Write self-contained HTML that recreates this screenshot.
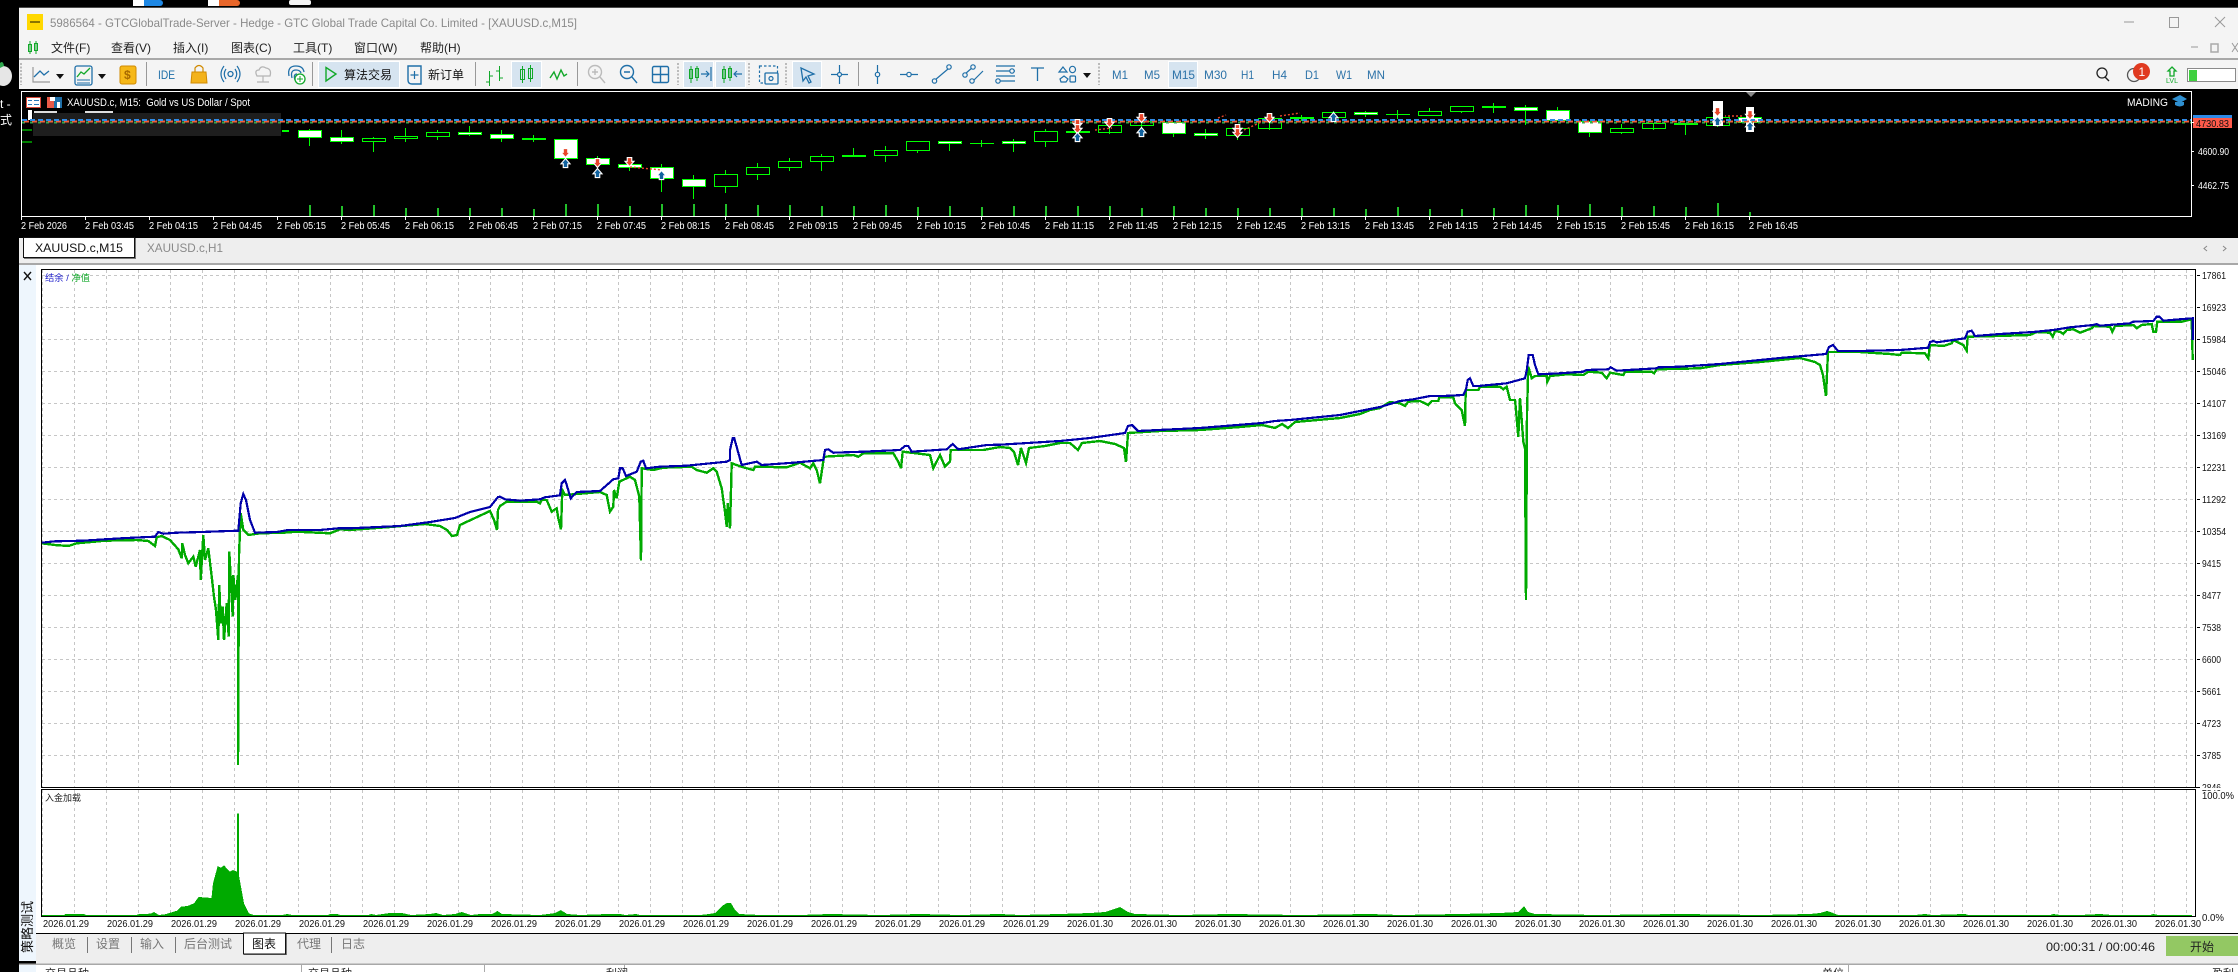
<!DOCTYPE html>
<html lang="zh">
<head>
<meta charset="utf-8">
<title>MetaTrader strategy tester</title>
<style>
html,body{margin:0;padding:0;background:#000;width:2238px;height:972px;overflow:hidden}
svg{display:block}
text{font-family:"Liberation Sans","Noto Sans CJK SC",sans-serif;white-space:pre}
.m{font-size:12px;fill:#222}
.tf{font-size:12px;fill:#2c72a8}
.t{font-size:10px;fill:#fff}
.d{font-size:10px;fill:#111}
.a{font-size:10px;fill:#111}
.b{font-size:12px;fill:#777}
.c{shape-rendering:crispEdges}
</style>
</head>
<body>
<svg width="2238" height="972" viewBox="0 0 2238 972" xmlns="http://www.w3.org/2000/svg">
<defs>
<pattern id="vg" x="10" y="270" width="32" height="6" patternUnits="userSpaceOnUse"><rect width="1" height="3" fill="#c6c6c6"/></pattern>
<pattern id="hg" x="0" y="275" width="6" height="32" patternUnits="userSpaceOnUse"><rect width="3" height="1" fill="#c6c6c6"/></pattern>
<pattern id="vg2" x="10" y="790" width="32" height="6" patternUnits="userSpaceOnUse"><rect width="1" height="3" fill="#c6c6c6"/></pattern>
<g id="dn" transform="scale(.75)"><path d="M-3 -6H3V-1H6L0 6L-6 -1H-3Z" fill="#e8452a" stroke="#fff" stroke-width="1.500"/></g>
<g id="up" transform="scale(.75)"><path d="M0 -6L6 1H3V6H-3V1H-6Z" fill="#11629f" stroke="#fff" stroke-width="1.500"/></g>
</defs>

<rect width="2238" height="972" fill="#000"/>

<!-- desktop fragments -->
<rect x="133" y="0" width="30" height="6" rx="3" fill="#1e88e5"/>
<rect x="133" y="0" width="11" height="6" fill="#fff"/>
<rect x="208" y="0" width="32" height="6" rx="3" fill="#e8662a"/>
<rect x="208" y="0" width="11" height="6" fill="#fff"/>
<rect x="289" y="0" width="22" height="5" rx="2" fill="#f4f4f4"/>
<ellipse cx="3" cy="76" rx="9" ry="10" fill="#e6e6e6"/>
<path d="M0 63Q3 60 4 66L0 68Z" fill="#2fa84f"/>
<text x="0" y="108" style="font-size:12px;fill:#fff">t -</text>
<text x="0" y="124" style="font-size:12px;fill:#fff">式</text>

<!-- window title + menu -->
<rect x="19" y="7" width="2219" height="52" fill="#f4f4f4"/>
<rect x="19" y="7" width="2219" height="1" fill="#4a4a4a"/>
<rect x="27" y="14" width="16" height="16" fill="#ffd800"/>
<rect x="30" y="21" width="10" height="2" fill="#8a7500"/>
<text x="50" y="27" textLength="527" lengthAdjust="spacingAndGlyphs" style="font-size:12px;fill:#8a8a8a">5986564 - GTCGlobalTrade-Server - Hedge - GTC Global Trade Capital Co. Limited - [XAUUSD.c,M15]</text>
<path class="c" d="M2124 22H2134M2169.5 17.500H2178.500V27.500H2169.500ZM2191 47H2198" fill="none" stroke="#999"/>
<path d="M2215 17L2225 27M2225 17L2215 27M2232 43L2238 52M2238 43L2232 52" fill="none" stroke="#999"/>
<rect x="2211" y="44" width="7" height="8" fill="none" stroke="#aaa" stroke-width="1.5"/>

<rect class="c" x="28.500" y="44.500" width="3" height="7" fill="none" stroke="#12a82a"/>
<rect class="c" x="34.500" y="43.500" width="3" height="7" fill="none" stroke="#12a82a"/>
<path class="c" d="M30 41V54M36 41V54" stroke="#12a82a" fill="none"/>
<text class="m" x="51" y="52">文件(F)</text>
<text class="m" x="111" y="52">查看(V)</text>
<text class="m" x="173" y="52">插入(I)</text>
<text class="m" x="231" y="52">图表(C)</text>
<text class="m" x="293" y="52">工具(T)</text>
<text class="m" x="354" y="52">窗口(W)</text>
<text class="m" x="420" y="52">帮助(H)</text>

<!-- toolbar -->
<rect x="19" y="59" width="2219" height="30" fill="#f4f4f4"/>
<rect class="c" x="19" y="58" width="2219" height="2" fill="#a8a8a8"/>

<path d="M21 63V85M678 63V85M749 63V85M786 63V85M1099 63V85" stroke="#bbb" stroke-width="2" stroke-dasharray="2 1.500" fill="none"/>
<path class="c" d="M146.500 62V86M312.500 62V86M475.500 62V86M577.500 62V86M858.500 62V86" stroke="#999" fill="none"/>

<path d="M33 67V82H50" fill="none" stroke="#999" stroke-width="1.2"/>
<path d="M34 77L40 71L44 75L49 71" fill="none" stroke="#1f6fa8" stroke-width="1.3"/>
<path d="M56 74H64L60 79Z" fill="#111"/>
<rect x="75" y="66" width="17" height="19" rx="2" fill="none" stroke="#1f6fa8" stroke-width="1.3"/>
<path d="M77 77L81 72L84 74L90 68" fill="none" stroke="#12a82a" stroke-width="1.3"/>
<path d="M77 80H90M77 83H90" stroke="#1f6fa8" fill="none"/>
<path d="M98 74H106L102 79Z" fill="#111"/>
<rect x="120" y="66" width="16" height="18" rx="2" fill="#f6b818" stroke="#d08a00"/>
<text x="124" y="79" style="font-size:12px;font-weight:bold;fill:#a86a00">$</text>

<text x="158" y="79" textLength="17" lengthAdjust="spacingAndGlyphs" style="font-size:12px;fill:#1f6fa8">IDE</text>
<path d="M192 72H206L207 83H191Z" fill="#f3b21b" stroke="#d08a00"/>
<path d="M195 72V68Q199 63 203 68V72" fill="none" stroke="#d08a00" stroke-width="1.2"/>
<circle cx="230.500" cy="74" r="2.500" fill="none" stroke="#1f6fa8" stroke-width="1.3"/>
<path d="M226 69Q222.500 74 226 79M235 69Q238.500 74 235 79M224 66Q218 74 224 82M237 66Q243 74 237 82" fill="none" stroke="#1f6fa8" stroke-width="1.2"/>
<path d="M257 76Q254 70 259 70Q261 65 266 68Q272 69 270 76Z" fill="none" stroke="#b5b5b5" stroke-width="1.3"/>
<path d="M263 76V82M257 82H269" stroke="#b5b5b5" fill="none" stroke-width="1.2"/>
<path d="M289 76Q287 66 296 66Q303 66 304 72M292 78Q290 70 296 70Q300 70 301 73M295 80Q293 74 297 74" fill="none" stroke="#1f6fa8" stroke-width="1.3"/>
<circle cx="300" cy="79" r="5" fill="#fff" stroke="#12a82a" stroke-width="1.3"/>
<path d="M300 76V82M297 79H303" stroke="#12a82a" fill="none"/>

<rect class="c" x="318.500" y="61.500" width="81" height="26" fill="#d6e4f0" stroke="#fff"/>
<path d="M326 67.500L336 74L326 81Z" fill="none" stroke="#12a82a" stroke-width="1.4"/>
<text x="344" y="79" style="font-size:12px;fill:#111">算法交易</text>
<path d="M408 66H421V84H412Q408 84 408 80Z" fill="none" stroke="#1f6fa8" stroke-width="1.4"/>
<path d="M414.500 71V79M410.500 75H418.500" stroke="#1f6fa8" fill="none" stroke-width="1.2"/>
<text x="428" y="79" style="font-size:12px;fill:#111">新订单</text>

<path class="c" d="M489.500 71V86M486 82H489.500M489.500 76H493M499.500 66V81M496 71H499.500M499.500 78H503" stroke="#12a82a" fill="none"/>
<rect class="c" x="511.500" y="61.500" width="30" height="26" fill="#d6e4f0" stroke="#fff"/>
<rect class="c" x="520.500" y="69.500" width="4" height="10" fill="none" stroke="#12a82a"/>
<rect class="c" x="528.500" y="68.500" width="4" height="10" fill="none" stroke="#12a82a"/>
<path class="c" d="M522.500 66V83M530.500 65V82" stroke="#12a82a" fill="none"/>
<path d="M550 78L554 72L557 79L561 70L564 76L567 74" fill="none" stroke="#12a82a" stroke-width="1.4"/>

<circle cx="595" cy="72" r="6.500" fill="none" stroke="#bbb" stroke-width="1.4"/>
<path d="M600 77L605 83M592 72H598M595 69V75" stroke="#bbb" stroke-width="1.4" fill="none"/>
<circle cx="627" cy="72" r="6.500" fill="none" stroke="#1f6fa8" stroke-width="1.4"/>
<path d="M632 77L637 83M624 72H630" stroke="#1f6fa8" stroke-width="1.4" fill="none"/>
<rect x="652.500" y="66.500" width="16" height="16" rx="1.500" fill="none" stroke="#1f6fa8" stroke-width="1.4"/>
<path d="M660.500 66V83M652 74.500H669" stroke="#1f6fa8" stroke-width="1.4" fill="none"/>

<rect class="c" x="683.500" y="61.500" width="30" height="26" fill="#d6e4f0" stroke="#fff"/>
<rect class="c" x="689.500" y="69.500" width="3" height="9" fill="none" stroke="#12a82a"/>
<rect class="c" x="695.500" y="68.500" width="3" height="9" fill="none" stroke="#12a82a"/>
<path class="c" d="M691 66V83M697 66V81" stroke="#12a82a" fill="none"/>
<path d="M701 74H709M706 71L709 74L706 77M711 67V81" stroke="#1f6fa8" fill="none" stroke-width="1.2"/>
<rect class="c" x="715.500" y="61.500" width="30" height="26" fill="#d6e4f0" stroke="#fff"/>
<rect class="c" x="722.500" y="69.500" width="3" height="9" fill="none" stroke="#12a82a"/>
<rect class="c" x="728.500" y="68.500" width="3" height="9" fill="none" stroke="#12a82a"/>
<path class="c" d="M724 66V83M730 66V81" stroke="#12a82a" fill="none"/>
<path d="M742 74H734M737 71L734 74L737 77" stroke="#1f6fa8" fill="none" stroke-width="1.2"/>

<rect x="759.500" y="66" width="18" height="17" fill="none" stroke="#1f6fa8" stroke-dasharray="2.500 2" stroke-width="1.2"/>
<rect x="765" y="73" width="13" height="11" rx="1" fill="#f4f4f4" stroke="#1f6fa8" stroke-width="1.3"/>
<circle cx="771" cy="78.500" r="2" fill="none" stroke="#1f6fa8" stroke-width="1.2"/>

<rect class="c" x="792.500" y="61.500" width="29" height="26" fill="#d6e4f0" stroke="#fff"/>
<path d="M801 68L814 74L808 76L811 82L809 83L806 77L803 81Z" fill="none" stroke="#1f6fa8" stroke-width="1.3"/>
<path d="M839.500 65V84M831 74.500H848" stroke="#1f6fa8" stroke-width="1.2" fill="none"/>
<circle cx="839.500" cy="74.500" r="2" fill="#f4f4f4" stroke="#1f6fa8" stroke-width="1.2"/>

<path d="M877.500 65V84" stroke="#1f6fa8" stroke-width="1.2"/>
<circle cx="877.500" cy="74.500" r="2.200" fill="#f4f4f4" stroke="#1f6fa8" stroke-width="1.2"/>
<path d="M900 74.500H918" stroke="#1f6fa8" stroke-width="1.2"/>
<circle cx="909" cy="74.500" r="2.200" fill="#f4f4f4" stroke="#1f6fa8" stroke-width="1.2"/>
<path d="M935 80L948 69" stroke="#1f6fa8" stroke-width="1.2"/>
<circle cx="934.500" cy="81" r="2.200" fill="#f4f4f4" stroke="#1f6fa8" stroke-width="1.2"/>
<circle cx="949" cy="67" r="2.200" fill="#f4f4f4" stroke="#1f6fa8" stroke-width="1.2"/>
<path d="M965 74L973 67M972 82L983 71" stroke="#1f6fa8" stroke-width="1.2"/>
<circle cx="965" cy="75" r="2.200" fill="#f4f4f4" stroke="#1f6fa8" stroke-width="1.2"/>
<circle cx="973" cy="67" r="2.200" fill="#f4f4f4" stroke="#1f6fa8" stroke-width="1.2"/>
<circle cx="972" cy="81" r="2.200" fill="#f4f4f4" stroke="#1f6fa8" stroke-width="1.2"/>
<path d="M996 66H1015M996 71H1015M996 76H1015M996 81H1015" stroke="#1f6fa8" stroke-width="1.2"/>
<circle cx="1012" cy="71" r="2.200" fill="#f4f4f4" stroke="#1f6fa8" stroke-width="1.2"/>
<circle cx="998" cy="81" r="2.200" fill="#f4f4f4" stroke="#1f6fa8" stroke-width="1.2"/>
<path d="M1031 68H1044M1037.500 68V81" stroke="#1f6fa8" stroke-width="1.3" fill="none"/>
<path d="M1063 67L1067 72H1059Z" fill="none" stroke="#1f6fa8" stroke-width="1.2"/>
<ellipse cx="1072.500" cy="69.500" rx="3" ry="3.200" fill="none" stroke="#1f6fa8" stroke-width="1.2"/>
<path d="M1064 76L1068 79L1066 82H1061L1060 79Z" fill="none" stroke="#1f6fa8" stroke-width="1.2"/>
<rect x="1070" y="76" width="5.500" height="6" rx="1" fill="none" stroke="#1f6fa8" stroke-width="1.2"/>
<path d="M1083 73H1091L1087 78Z" fill="#111"/>

<rect class="c" x="1168.500" y="61.500" width="29" height="26" fill="#d6e4f0" stroke="#fff"/>
<text class="tf" x="1112" y="79" textLength="16" lengthAdjust="spacingAndGlyphs">M1</text>
<text class="tf" x="1144" y="79" textLength="16" lengthAdjust="spacingAndGlyphs">M5</text>
<text class="tf" x="1172" y="79" textLength="23" lengthAdjust="spacingAndGlyphs">M15</text>
<text class="tf" x="1204" y="79" textLength="23" lengthAdjust="spacingAndGlyphs">M30</text>
<text class="tf" x="1241" y="79" textLength="13" lengthAdjust="spacingAndGlyphs">H1</text>
<text class="tf" x="1272" y="79" textLength="15" lengthAdjust="spacingAndGlyphs">H4</text>
<text class="tf" x="1305" y="79" textLength="14" lengthAdjust="spacingAndGlyphs">D1</text>
<text class="tf" x="1336" y="79" textLength="16" lengthAdjust="spacingAndGlyphs">W1</text>
<text class="tf" x="1367" y="79" textLength="18" lengthAdjust="spacingAndGlyphs">MN</text>

<circle cx="2102" cy="73" r="5" fill="none" stroke="#222" stroke-width="1.3"/>
<path d="M2105 77L2109 81" stroke="#222" stroke-width="1.4"/>
<circle cx="2134" cy="75" r="6.500" fill="none" stroke="#555" stroke-width="1.3"/>
<circle cx="2141.500" cy="71.500" r="8.500" fill="#e03a20"/>
<text x="2138.500" y="76" style="font-size:12px;fill:#fff">1</text>
<path d="M2172 67L2176 71H2174V76H2170V71H2168Z" fill="none" stroke="#12a82a" stroke-width="1.3"/>
<text x="2166" y="83" textLength="12" lengthAdjust="spacingAndGlyphs" style="font-size:7px;fill:#12a82a">LVL</text>
<rect class="c" x="2187.500" y="68.500" width="48" height="13" fill="#fff" stroke="#8a8a8a"/>
<rect class="c" x="2189" y="70" width="8" height="11" fill="#3fd03f"/>

<!-- price chart -->
<rect x="19" y="89" width="2219" height="149" fill="#000"/>
<path class="c" d="M21.500 91.500H2191.500V216.500H21.500Z" fill="none" stroke="#fff"/>

<rect x="26.500" y="97.500" width="14" height="10" fill="#fff" stroke="#d94a3a"/>
<path class="c" d="M28 100.500H32M34 100.500H39M28 104.500H32M34 104.500H39" stroke="#2878b8" fill="none"/>
<rect x="47" y="97" width="15" height="11" fill="#e85a48"/>
<rect x="54" y="97" width="8" height="11" fill="#1f6fa8"/>
<rect x="50" y="97" width="5" height="4" fill="#fff"/>
<rect x="57" y="102" width="3" height="6" fill="#fff"/>
<text x="67" y="106" textLength="183" lengthAdjust="spacingAndGlyphs" style="font-size:11px;fill:#fff">XAUUSD.c, M15:  Gold vs US Dollar / Spot</text>
<text x="2127" y="106" textLength="41" lengthAdjust="spacingAndGlyphs" style="font-size:11px;fill:#fff">MADING</text>
<path d="M2172 99L2180 95L2187 99L2180 103Z" fill="#2f8fd0"/>
<path d="M2175 102V105Q2180 108 2184 105V102" fill="#2f8fd0"/>
<path d="M1746 92H1756L1751 97Z" fill="#888"/>

<rect class="c" x="28" y="110" width="4" height="10" fill="#fff"/>
<rect class="c" x="34" y="111" width="23" height="2" fill="#ddd"/>
<rect class="c" x="85" y="111" width="28" height="2" fill="#ddd"/>
<rect class="c" x="33" y="113" width="248" height="23" fill="#1e1e1e"/>
<path class="c" d="M22 130H32M22 142H32" stroke="#0f0" fill="none"/>
<rect class="c" x="282" y="130" width="7" height="2" fill="#0f0"/>

<!-- wicks -->
<path class="c" d="M309.500 129V146M341.500 130V144M373.500 137V152M405.500 128V142M437.500 130V140M469.500 126V136M501.500 130V142M533.500 135V142M565.500 139V160M597.500 156V166M629.500 158V171M661.500 164V192M693.500 175V199M725.500 170V193M757.500 163V180M789.500 158V171M821.500 154V171M853.500 148V157M885.500 146V162M917.500 141V153M949.500 141V151M981.500 140V147M1013.500 139V152M1045.500 129V147M1077.500 120V140M1109.500 120V134M1141.500 116V130M1173.500 122V137M1205.500 129V139M1237.500 125V140M1269.500 118V130M1301.500 115V121M1333.500 111V121M1365.500 111V117M1397.500 110V119M1429.500 108V116M1461.500 106V113M1493.500 103V113M1525.500 105V125M1557.500 107V120M1589.500 121V137M1621.500 124V134M1653.500 123V130M1685.500 123V135M1717.500 117V127" stroke="#0f0" fill="none"/>
<!-- bodies -->
<g class="c" stroke="#0f0" stroke-width="1">
<rect x="298.500" y="130.500" width="23" height="7" fill="#fff"/>
<rect x="330.500" y="137.500" width="23" height="4" fill="#fff"/>
<rect x="362.500" y="138.500" width="23" height="3" fill="#000"/>
<rect x="394.500" y="136.500" width="23" height="2" fill="#000"/>
<rect x="426.500" y="132.500" width="23" height="4" fill="#000"/>
<rect x="458.500" y="132.500" width="23" height="2" fill="#fff"/>
<rect x="490.500" y="134.500" width="23" height="4" fill="#fff"/>
<rect x="522.500" y="138.500" width="23" height="1" fill="#0f0"/>
<rect x="554.500" y="139.500" width="23" height="19" fill="#fff"/>
<rect x="586.500" y="158.500" width="23" height="6" fill="#fff"/>
<rect x="618.500" y="164.500" width="23" height="3" fill="#fff"/>
<rect x="650.500" y="167.500" width="23" height="11" fill="#fff"/>
<rect x="682.500" y="179.500" width="23" height="7" fill="#fff"/>
<rect x="714.500" y="174.500" width="23" height="12" fill="#000"/>
<rect x="746.500" y="167.500" width="23" height="7" fill="#000"/>
<rect x="778.500" y="161.500" width="23" height="6" fill="#000"/>
<rect x="810.500" y="156.500" width="23" height="5" fill="#000"/>
<rect x="842.500" y="155.500" width="23" height="1" fill="#0f0"/>
<rect x="874.500" y="150.500" width="23" height="5" fill="#000"/>
<rect x="906.500" y="141.500" width="23" height="9" fill="#000"/>
<rect x="938.500" y="141.500" width="23" height="2" fill="#fff"/>
<rect x="1002.500" y="141.500" width="23" height="2" fill="#fff"/>
<rect x="1034.500" y="131.500" width="23" height="10" fill="#000"/>
<rect x="1066.500" y="131.500" width="23" height="1" fill="#0f0"/>
<rect x="1098.500" y="125.500" width="23" height="7" fill="none"/>
<rect x="1130.500" y="121.500" width="23" height="4" fill="none"/>
<rect x="1162.500" y="122.500" width="23" height="11" fill="#fff"/>
<rect x="1194.500" y="133.500" width="23" height="2" fill="#fff"/>
<rect x="1226.500" y="128.500" width="23" height="7" fill="none"/>
<rect x="1258.500" y="118.500" width="23" height="10" fill="none"/>
<rect x="1290.500" y="117.500" width="23" height="1" fill="#0f0"/>
<rect x="1322.500" y="112.500" width="23" height="5" fill="#000"/>
<rect x="1354.500" y="112.500" width="23" height="2" fill="#fff"/>
<rect x="1418.500" y="111.500" width="23" height="4" fill="#000"/>
<rect x="1450.500" y="106.500" width="23" height="5" fill="#000"/>
<rect x="1482.500" y="106.500" width="23" height="1" fill="#0f0"/>
<rect x="1514.500" y="107.500" width="23" height="3" fill="#fff"/>
<rect x="1546.500" y="110.500" width="23" height="10" fill="#fff"/>
<rect x="1578.500" y="121.500" width="23" height="11" fill="#fff"/>
<rect x="1610.500" y="128.500" width="23" height="4" fill="#000"/>
<rect x="1642.500" y="123.500" width="23" height="5" fill="none"/>
<rect x="1674.500" y="123.500" width="23" height="1" fill="#0f0"/>
<rect x="1706.500" y="117.500" width="23" height="8" fill="none"/>
<rect x="1738.500" y="117.500" width="23" height="5" fill="#fff"/>
</g>
<rect class="c" x="970" y="143" width="24" height="1" fill="#0f0"/>
<rect class="c" x="1386" y="114" width="24" height="1" fill="#0f0"/>
<rect class="c" x="1713" y="101" width="10" height="25" fill="#fff"/>
<rect class="c" x="1746" y="107" width="8" height="25" fill="#fff"/>

<!-- price lines -->
<path class="c" d="M22 122.500H2191" stroke="#2fa84f" stroke-width="2" stroke-dasharray="3 5" fill="none"/>
<path class="c" d="M24 121.500H2191" stroke="#f0603c" stroke-width="2" stroke-dasharray="5 3" fill="none"/>
<path class="c" d="M22 120H2191" stroke="#2f8ae6" stroke-width="2" stroke-dasharray="5 3" fill="none"/>

<path d="M1218 118L1226 115M1130 122L1150 121M1095 130L1112 128M1244 130L1270 118M1280 116L1300 113M630 167L662 170M1742 116L1725 116" stroke="#e8452a" stroke-dasharray="2 2" fill="none" stroke-width="1.4"/>
<use href="#dn" x="565.500" y="153"/>
<use href="#up" x="565.500" y="163"/>
<use href="#dn" x="597.500" y="163"/>
<use href="#up" x="597.500" y="173"/>
<use href="#dn" x="629.500" y="162"/>
<use href="#up" x="661.500" y="175"/>
<use href="#dn" x="1077.500" y="124"/>
<use href="#dn" x="1077.500" y="129"/>
<use href="#up" x="1077.500" y="137"/>
<use href="#dn" x="1109.500" y="123"/>
<use href="#dn" x="1141.500" y="118"/>
<use href="#up" x="1141.500" y="132"/>
<use href="#dn" x="1237.500" y="129"/>
<use href="#dn" x="1237.500" y="133"/>
<use href="#dn" x="1269.500" y="118"/>
<use href="#up" x="1333.500" y="117"/>
<use href="#dn" x="1717.500" y="112"/>
<use href="#up" x="1717.500" y="121"/>
<use href="#dn" x="1750" y="115"/>
<use href="#up" x="1750" y="126"/>

<!-- volume -->
<path class="c" stroke="#22c02a" stroke-width="2" fill="none" d="M310 205V216M342 206V216M374 205V216M406 208V216M438 208V216M470 208V216M502 208V216M534 209V216M566 204V216M598 204V216M630 206V216M662 204V216M694 204V216M726 204V216M758 205V216M790 205V216M822 206V216M854 206V216M886 205V216M918 207V216M950 206V216M982 207V216M1014 206V216M1046 206V216M1078 206V216M1110 206V216M1142 208V216M1174 206V216M1206 208V216M1238 208V216M1270 208V216M1302 208V216M1334 208V216M1366 209V216M1398 207V216M1430 209V216M1462 209V216M1494 208V216M1526 205V216M1558 205V216M1590 204V216M1622 207V216M1654 206V216M1686 207V216M1718 203V216M1750 212V216"/>

<!-- time axis -->
<path class="c" stroke="#fff" fill="none" d="M21.500 217V220M85.500 217V220M149.500 217V220M213.500 217V220M277.500 217V220M341.500 217V220M405.500 217V220M469.500 217V220M533.500 217V220M597.500 217V220M661.500 217V220M725.500 217V220M789.500 217V220M853.500 217V220M917.500 217V220M981.500 217V220M1045.500 217V220M1109.500 217V220M1173.500 217V220M1237.500 217V220M1301.500 217V220M1365.500 217V220M1429.500 217V220M1493.500 217V220M1557.500 217V220M1621.500 217V220M1685.500 217V220M1749.500 217V220"/>
<text class="t" x="21" y="229" textLength="46" lengthAdjust="spacingAndGlyphs">2 Feb 2026</text>
<text class="t" x="85" y="229" textLength="49" lengthAdjust="spacingAndGlyphs">2 Feb 03:45</text>
<text class="t" x="149" y="229" textLength="49" lengthAdjust="spacingAndGlyphs">2 Feb 04:15</text>
<text class="t" x="213" y="229" textLength="49" lengthAdjust="spacingAndGlyphs">2 Feb 04:45</text>
<text class="t" x="277" y="229" textLength="49" lengthAdjust="spacingAndGlyphs">2 Feb 05:15</text>
<text class="t" x="341" y="229" textLength="49" lengthAdjust="spacingAndGlyphs">2 Feb 05:45</text>
<text class="t" x="405" y="229" textLength="49" lengthAdjust="spacingAndGlyphs">2 Feb 06:15</text>
<text class="t" x="469" y="229" textLength="49" lengthAdjust="spacingAndGlyphs">2 Feb 06:45</text>
<text class="t" x="533" y="229" textLength="49" lengthAdjust="spacingAndGlyphs">2 Feb 07:15</text>
<text class="t" x="597" y="229" textLength="49" lengthAdjust="spacingAndGlyphs">2 Feb 07:45</text>
<text class="t" x="661" y="229" textLength="49" lengthAdjust="spacingAndGlyphs">2 Feb 08:15</text>
<text class="t" x="725" y="229" textLength="49" lengthAdjust="spacingAndGlyphs">2 Feb 08:45</text>
<text class="t" x="789" y="229" textLength="49" lengthAdjust="spacingAndGlyphs">2 Feb 09:15</text>
<text class="t" x="853" y="229" textLength="49" lengthAdjust="spacingAndGlyphs">2 Feb 09:45</text>
<text class="t" x="917" y="229" textLength="49" lengthAdjust="spacingAndGlyphs">2 Feb 10:15</text>
<text class="t" x="981" y="229" textLength="49" lengthAdjust="spacingAndGlyphs">2 Feb 10:45</text>
<text class="t" x="1045" y="229" textLength="49" lengthAdjust="spacingAndGlyphs">2 Feb 11:15</text>
<text class="t" x="1109" y="229" textLength="49" lengthAdjust="spacingAndGlyphs">2 Feb 11:45</text>
<text class="t" x="1173" y="229" textLength="49" lengthAdjust="spacingAndGlyphs">2 Feb 12:15</text>
<text class="t" x="1237" y="229" textLength="49" lengthAdjust="spacingAndGlyphs">2 Feb 12:45</text>
<text class="t" x="1301" y="229" textLength="49" lengthAdjust="spacingAndGlyphs">2 Feb 13:15</text>
<text class="t" x="1365" y="229" textLength="49" lengthAdjust="spacingAndGlyphs">2 Feb 13:45</text>
<text class="t" x="1429" y="229" textLength="49" lengthAdjust="spacingAndGlyphs">2 Feb 14:15</text>
<text class="t" x="1493" y="229" textLength="49" lengthAdjust="spacingAndGlyphs">2 Feb 14:45</text>
<text class="t" x="1557" y="229" textLength="49" lengthAdjust="spacingAndGlyphs">2 Feb 15:15</text>
<text class="t" x="1621" y="229" textLength="49" lengthAdjust="spacingAndGlyphs">2 Feb 15:45</text>
<text class="t" x="1685" y="229" textLength="49" lengthAdjust="spacingAndGlyphs">2 Feb 16:15</text>
<text class="t" x="1749" y="229" textLength="49" lengthAdjust="spacingAndGlyphs">2 Feb 16:45</text>

<!-- price axis -->
<rect class="c" x="2193" y="115" width="39" height="3" fill="#2f8ae6"/>
<rect class="c" x="2193" y="118" width="39" height="10" fill="#ff5a4a"/>
<text x="2196" y="127" textLength="33" lengthAdjust="spacingAndGlyphs" style="font-size:10px;fill:#111">4730.83</text>
<text x="2198" y="155" textLength="31" lengthAdjust="spacingAndGlyphs" style="font-size:10px;fill:#fff">4600.90</text>
<text x="2198" y="189" textLength="31" lengthAdjust="spacingAndGlyphs" style="font-size:10px;fill:#fff">4462.75</text>
<path class="c" d="M2191 122.500H2194M2191 151.500H2194M2191 185.500H2194" stroke="#fff"/>

<!-- tab strip -->
<rect x="19" y="238" width="2219" height="26" fill="#eeeeee"/>
<rect class="c" x="24" y="238" width="112" height="21" fill="#777"/>
<rect class="c" x="23.500" y="237.500" width="111" height="20" fill="#fff" stroke="#111"/>
<text x="35" y="252" textLength="88" lengthAdjust="spacingAndGlyphs" style="font-size:12px;fill:#111">XAUUSD.c,M15</text>
<text x="147" y="252" textLength="76" lengthAdjust="spacingAndGlyphs" style="font-size:12px;fill:#8a8a8a">XAUUSD.c,H1</text>
<path d="M2207 246L2204 248.500L2207 251M2223 246L2226 248.500L2223 251" fill="none" stroke="#888"/>
<rect class="c" x="19" y="263" width="2219" height="2" fill="#a8a8a8"/>

<!-- tester pane -->
<rect x="19" y="265" width="2219" height="669" fill="#fff"/>
<rect x="19" y="265" width="17" height="696" fill="#eef6fd"/>
<path d="M24 272L31 280M31 272L24 280" stroke="#111" stroke-width="1.4"/>
<text transform="translate(32,953) rotate(-90)" style="font-size:13px;fill:#111">策略测试</text>

<rect class="c" x="42" y="270" width="2154" height="517" fill="url(#vg)"/>
<rect class="c" x="42" y="270" width="2154" height="517" fill="url(#hg)"/>

<polyline fill="none" stroke="#00aa00" stroke-width="2.400" stroke-linejoin="miter" class="c" points="41.700,543.300 55,545 68.300,546 76.700,543.300 105,540.700 136.700,540 148.300,541 155,546 156.700,537.300 161.700,536 170,540 178.300,549.300 181.700,558.300 182.300,543.300 185,555 188.300,563.300 193.300,556.700 195.700,566.700 200,550 200.700,580 203.300,535 205,560 208.300,548.300 211.700,576.700 214,596.700 216,610 218.300,640 219.300,585 220.700,623.300 222.700,606.700 224,640 226.700,603.300 228.700,636.700 229.300,551.700 232.700,616.700 233.300,575 235.300,600 238,575 238,765 239,555 240.700,513.300 243.300,530 248.300,535 260,533.300 283.300,532.700 296.700,531.700 330,533.300 340,529.300 350,530 390,527 425,524 440,526 447,530 452,536 457,535 460,525 475,518 490,511 494,520 497,530 498,510 500,506 506.700,501.700 536.700,501.700 540,503.300 541.700,500 546.700,500 551.700,511.700 556.700,508.300 558.300,518.300 561,529.300 562.300,490 565,495 600,492 606.700,495 610,511.700 613.300,506.700 614,490 616.700,498.300 619.300,481.700 630,476.700 635,480 639.300,496.700 641,560.700 641.700,468.300 653.300,470 663.300,467.700 691.700,466.700 696.700,470 706.700,472.700 713.300,468.300 716.700,471.700 721.700,488.300 725,511.700 726.700,526.700 727.700,503.300 730,528.300 731.700,463.300 743.300,467.300 753.300,470 755,466.700 786.700,467.300 800,462.700 810,468.300 813.300,463.300 816.700,470 820,483.300 824,456.700 853.300,455 858.300,456.700 863.300,453.300 893.300,453.300 898.300,461.700 901,468.300 902.700,451.700 930,455 933.300,468.300 940,455 945,466.700 950,461.700 950.700,450 983.300,450 1000,447 1010,448 1014,452 1018,465 1021,448 1026,463 1029,448 1045,446 1060,443 1070,443 1078,450 1082,443 1100,441 1115,444 1124,448 1126,462 1128,433 1160,431 1200,430 1240,427 1262,425 1275,428 1282,424 1288,428 1295,422 1340,418 1360,414 1370,410 1380,408 1390,402 1400,403.300 1405,406 1408.300,401.700 1420,401 1428.300,405 1431.700,401 1438.300,401 1439.300,397.300 1453.300,397.300 1455,403.300 1461.700,410 1462.700,415 1465,426 1465.700,390 1478.300,390 1480,386.700 1500,386.700 1503.300,389.300 1506.700,386.700 1510,400 1515,400 1516,410 1518.300,437 1520,398.300 1521.700,420 1523.300,441.700 1525,448.300 1526,600 1527,413 1528.300,366.700 1531.700,378.300 1535,376 1546.700,376 1547.300,381.700 1550,376 1566.700,374.300 1583.300,375 1588.300,371.700 1601.700,372.700 1606.700,378.300 1610,372.700 1623.300,375 1625,371.700 1651.700,371.700 1654,373.300 1656.700,369.300 1700,368.300 1720,365 1760,362 1800,358 1815,362 1820,365 1823,375 1826,396 1828,352 1860,352 1890,354 1900,355 1901.700,352.700 1925,353.300 1928.300,358.300 1930,345 1943.300,346 1951.700,343.300 1953.300,340 1963.300,345 1966.700,350.700 1967.700,336.700 1996.700,336 2030,335 2036.700,332 2050,332.700 2052.700,336.700 2055,331.300 2060,331.700 2063.300,334 2066.700,330 2073.300,329.300 2080,332.700 2091.700,328.300 2094,326 2110,326.700 2112.300,331.700 2115,326 2133.300,325 2136.700,328.300 2141.700,325 2151.700,324 2153.300,331.700 2156,331.700 2157.300,321.700 2181.700,321.700 2191.700,319.300 2192.700,360"/>
<polyline fill="none" stroke="#0000aa" stroke-width="2.200" class="c" points="41.700,542.700 55,541.300 83.300,540.700 105,539.300 126.700,538 155,536.700 158.300,532 163.300,533.700 176.700,532.700 201.700,532 220,531.300 238.300,530.700 240.700,503.300 243.300,494 246,500 250,520 255,532.700 276.700,532 288.300,530 320,530 338.300,528.300 350,528.300 400,526 430,522 455,518 470,512 490,507 498,497 500,496.700 505,499.300 520,500.700 540,499.300 545,497.300 560,495.300 561.700,483.300 565,480 566.700,485 570.700,498.300 576.700,492 600,491 613.300,479.300 618.300,478.300 620,468.300 622.700,468.300 626,476 636.700,471.700 640.700,461.700 643.300,460.700 646,468.300 660,466.700 686.700,465.700 726.700,461.700 730,460 730,450 732.700,438.300 734.300,438.300 741.700,465 756.700,461.700 761.700,465 793.300,462.700 823.300,460 825,450 828.300,449.300 833.300,452.700 863.300,451.700 900,450 905,446 908.300,446 911.700,451.700 946.700,449.300 952.700,444 958.300,449.300 986.700,445 1000,444.700 1060,441 1090,438 1125,433 1128,426 1132,425 1138,431 1200,428 1262,423 1275,421 1290,420 1340,415 1380,407 1400,401 1413.300,399.300 1430,396 1443.300,396 1463.300,395 1466,389.300 1467.700,380 1470,378.300 1473.300,386 1478.300,386 1506.700,383.300 1525,378.300 1526.700,370.700 1528.700,355 1532.700,355 1535,365 1538.300,374.300 1560,373.300 1583.300,371.700 1586.700,370 1608.300,369.300 1610.700,367.300 1616.700,370.700 1640,369.300 1656.700,368.300 1658.300,367.300 1680,366.700 1720,364 1780,358 1826,354 1829,347 1833,345 1838,351 1860,351 1900,350 1928.300,347.700 1930,342 1933.300,341 1936.700,342.300 1953.300,340 1965,338.300 1967.700,331.700 1971.700,330.700 1975,336 2000,334 2033.300,332 2053.300,330 2070,327.300 2093.300,325 2096.700,324 2100,325.700 2130,323.300 2133.300,321.700 2153.300,321 2156.700,316.700 2159.300,316.700 2163.300,320.700 2183.300,319 2192.700,318.300 2192.700,340"/>

<text x="45" y="281" textLength="45" lengthAdjust="spacingAndGlyphs" style="font-size:9px;fill:#2222cc">结余 / <tspan fill="#12a82a">净值</tspan></text>
<rect class="c" x="42" y="269" width="2154" height="1" fill="#000"/>
<rect class="c" x="41" y="269" width="1" height="519" fill="#000"/>
<rect class="c" x="2195" y="269" width="1" height="519" fill="#000"/>

<!-- y axis -->
<path class="c" stroke="#000" fill="none" d="M2197 275.500H2200M2197 307.500H2200M2197 339.500H2200M2197 371.500H2200M2197 403.500H2200M2197 435.500H2200M2197 467.500H2200M2197 499.500H2200M2197 531.500H2200M2197 563.500H2200M2197 595.500H2200M2197 627.500H2200M2197 659.500H2200M2197 691.500H2200M2197 723.500H2200M2197 755.500H2200M2197 787.500H2200"/>
<text class="a" x="2202" y="279" textLength="24" lengthAdjust="spacingAndGlyphs">17861</text>
<text class="a" x="2202" y="311" textLength="24" lengthAdjust="spacingAndGlyphs">16923</text>
<text class="a" x="2202" y="343" textLength="24" lengthAdjust="spacingAndGlyphs">15984</text>
<text class="a" x="2202" y="375" textLength="24" lengthAdjust="spacingAndGlyphs">15046</text>
<text class="a" x="2202" y="407" textLength="24" lengthAdjust="spacingAndGlyphs">14107</text>
<text class="a" x="2202" y="439" textLength="24" lengthAdjust="spacingAndGlyphs">13169</text>
<text class="a" x="2202" y="471" textLength="24" lengthAdjust="spacingAndGlyphs">12231</text>
<text class="a" x="2202" y="503" textLength="24" lengthAdjust="spacingAndGlyphs">11292</text>
<text class="a" x="2202" y="535" textLength="24" lengthAdjust="spacingAndGlyphs">10354</text>
<text class="a" x="2202" y="567" textLength="19" lengthAdjust="spacingAndGlyphs">9415</text>
<text class="a" x="2202" y="599" textLength="19" lengthAdjust="spacingAndGlyphs">8477</text>
<text class="a" x="2202" y="631" textLength="19" lengthAdjust="spacingAndGlyphs">7538</text>
<text class="a" x="2202" y="663" textLength="19" lengthAdjust="spacingAndGlyphs">6600</text>
<text class="a" x="2202" y="695" textLength="19" lengthAdjust="spacingAndGlyphs">5661</text>
<text class="a" x="2202" y="727" textLength="19" lengthAdjust="spacingAndGlyphs">4723</text>
<text class="a" x="2202" y="759" textLength="19" lengthAdjust="spacingAndGlyphs">3785</text>
<text class="a" x="2202" y="791" textLength="19" lengthAdjust="spacingAndGlyphs">2846</text>

<!-- lower chart -->
<rect class="c" x="41" y="788" width="2197" height="2" fill="#fff"/>
<rect class="c" x="41" y="787" width="2156" height="1" fill="#000"/>
<rect class="c" x="42" y="790" width="2154" height="126" fill="url(#vg2)"/>
<polygon fill="#00aa00" class="c" points="42,916 42,915 64.600,915 65,914 83.700,914 86,915 136,915 139,914 150.700,913.700 154,912 159,915 165,914.300 177,910.700 181,906.700 187.600,906 194,903.300 198.600,897 211.500,898 213,883.300 217.700,866 221,867.700 224,865.300 229.700,871.700 233,870 236.800,871.700 236.800,813.300 239.200,813.300 239.200,876.700 244,903.300 248.800,913.300 253.600,915 282,915 287,914 292,915 328,915 330,914 337,914 340,915 368,915 371,914 376,915 390,913 402,913 411,915 430,914 436,913 443,915 455,914 461.700,912 471,915 480,914 492,914 497.600,911 502,914 540,915 548,914 555,913 560.800,910 567,914 580,915 608,914 620,914 625,915 636,914 640,915 700,915 709,914 715,913 722,906 727,903 731,903 735,910 739,914 760,915 800,915 830,914 880,915 920,914 960,915 1000,914 1020,915 1060,914 1090,913 1105,912 1120,907 1128,912 1135,914 1180,915 1230,914 1300,915 1370,914 1400,915 1460,914 1500,913 1518,912 1524,906 1528,912 1535,914 1600,915 1680,914 1760,915 1810,914 1820,913 1827,911 1833,913 1838,915 1915,915 1925,914 1932,915 1965,914 1968,915 2050,915 2053,914 2060,915 2080,915 2100,914 2112,915 2150,915 2153,914 2158,915 2192,915 2192,916"/>
<rect x="41.500" y="789.500" width="2154" height="127" fill="none" stroke="#000" stroke-width="1" class="c"/>
<text x="45" y="801" textLength="36" lengthAdjust="spacingAndGlyphs" style="font-size:9px;fill:#222">入金加载</text>
<text class="a" x="2202" y="799" textLength="32" lengthAdjust="spacingAndGlyphs">100.0%</text>
<text class="a" x="2202" y="921" textLength="22" lengthAdjust="spacingAndGlyphs">0.0%</text>

<!-- lower date labels -->
<g>
<text class="d" x="43" y="927" textLength="46" lengthAdjust="spacingAndGlyphs">2026.01.29</text>
<text class="d" x="107" y="927" textLength="46" lengthAdjust="spacingAndGlyphs">2026.01.29</text>
<text class="d" x="171" y="927" textLength="46" lengthAdjust="spacingAndGlyphs">2026.01.29</text>
<text class="d" x="235" y="927" textLength="46" lengthAdjust="spacingAndGlyphs">2026.01.29</text>
<text class="d" x="299" y="927" textLength="46" lengthAdjust="spacingAndGlyphs">2026.01.29</text>
<text class="d" x="363" y="927" textLength="46" lengthAdjust="spacingAndGlyphs">2026.01.29</text>
<text class="d" x="427" y="927" textLength="46" lengthAdjust="spacingAndGlyphs">2026.01.29</text>
<text class="d" x="491" y="927" textLength="46" lengthAdjust="spacingAndGlyphs">2026.01.29</text>
<text class="d" x="555" y="927" textLength="46" lengthAdjust="spacingAndGlyphs">2026.01.29</text>
<text class="d" x="619" y="927" textLength="46" lengthAdjust="spacingAndGlyphs">2026.01.29</text>
<text class="d" x="683" y="927" textLength="46" lengthAdjust="spacingAndGlyphs">2026.01.29</text>
<text class="d" x="747" y="927" textLength="46" lengthAdjust="spacingAndGlyphs">2026.01.29</text>
<text class="d" x="811" y="927" textLength="46" lengthAdjust="spacingAndGlyphs">2026.01.29</text>
<text class="d" x="875" y="927" textLength="46" lengthAdjust="spacingAndGlyphs">2026.01.29</text>
<text class="d" x="939" y="927" textLength="46" lengthAdjust="spacingAndGlyphs">2026.01.29</text>
<text class="d" x="1003" y="927" textLength="46" lengthAdjust="spacingAndGlyphs">2026.01.29</text>
<text class="d" x="1067" y="927" textLength="46" lengthAdjust="spacingAndGlyphs">2026.01.30</text>
<text class="d" x="1131" y="927" textLength="46" lengthAdjust="spacingAndGlyphs">2026.01.30</text>
<text class="d" x="1195" y="927" textLength="46" lengthAdjust="spacingAndGlyphs">2026.01.30</text>
<text class="d" x="1259" y="927" textLength="46" lengthAdjust="spacingAndGlyphs">2026.01.30</text>
<text class="d" x="1323" y="927" textLength="46" lengthAdjust="spacingAndGlyphs">2026.01.30</text>
<text class="d" x="1387" y="927" textLength="46" lengthAdjust="spacingAndGlyphs">2026.01.30</text>
<text class="d" x="1451" y="927" textLength="46" lengthAdjust="spacingAndGlyphs">2026.01.30</text>
<text class="d" x="1515" y="927" textLength="46" lengthAdjust="spacingAndGlyphs">2026.01.30</text>
<text class="d" x="1579" y="927" textLength="46" lengthAdjust="spacingAndGlyphs">2026.01.30</text>
<text class="d" x="1643" y="927" textLength="46" lengthAdjust="spacingAndGlyphs">2026.01.30</text>
<text class="d" x="1707" y="927" textLength="46" lengthAdjust="spacingAndGlyphs">2026.01.30</text>
<text class="d" x="1771" y="927" textLength="46" lengthAdjust="spacingAndGlyphs">2026.01.30</text>
<text class="d" x="1835" y="927" textLength="46" lengthAdjust="spacingAndGlyphs">2026.01.30</text>
<text class="d" x="1899" y="927" textLength="46" lengthAdjust="spacingAndGlyphs">2026.01.30</text>
<text class="d" x="1963" y="927" textLength="46" lengthAdjust="spacingAndGlyphs">2026.01.30</text>
<text class="d" x="2027" y="927" textLength="46" lengthAdjust="spacingAndGlyphs">2026.01.30</text>
<text class="d" x="2091" y="927" textLength="46" lengthAdjust="spacingAndGlyphs">2026.01.30</text>
<text class="d" x="2155" y="927" textLength="46" lengthAdjust="spacingAndGlyphs">2026.01.30</text>
</g>

<!-- bottom tabs -->
<rect x="36" y="933" width="2202" height="31" fill="#eeeeee"/>
<rect class="c" x="36" y="933" width="2202" height="1" fill="#000"/>
<path class="c" d="M87.500 937V953M131.500 937V953M175.500 937V953M331.500 937V953" stroke="#777"/>
<text class="b" x="52" y="948">概览</text>
<text class="b" x="96" y="948">设置</text>
<text class="b" x="140" y="948">输入</text>
<text class="b" x="184" y="948">后台测试</text>
<rect class="c" x="244" y="934" width="43" height="21" fill="#777"/>
<rect class="c" x="243.500" y="933" width="42" height="21" fill="#fff" stroke="#111"/>
<text x="252" y="948" style="font-size:12px;fill:#111">图表</text>
<text class="b" x="297" y="948">代理</text>
<text class="b" x="341" y="948">日志</text>

<text x="2046" y="951" textLength="109" lengthAdjust="spacingAndGlyphs" style="font-size:12px;fill:#222">00:00:31 / 00:00:46</text>
<rect class="c" x="2166" y="936" width="72" height="20" fill="#93c863"/>
<text x="2190" y="951" style="font-size:12px;fill:#222">开始</text>

<!-- bottom table header fragment -->
<rect x="19" y="964" width="2219" height="8" fill="#fff"/>
<rect x="19" y="964" width="17" height="8" fill="#eef6fd"/>
<rect class="c" x="19" y="963.500" width="2219" height="1.500" fill="#a8a8a8"/>
<path class="c" d="M301.500 965V972M484.500 965V972M624.500 965V972M1848.500 965V972" stroke="#aaa"/>
<text x="45" y="977" style="font-size:11px;fill:#222">交易品种</text>
<text x="308" y="977" style="font-size:11px;fill:#222">交易品种</text>
<text x="606" y="977" style="font-size:11px;fill:#222">利润</text>
<text x="1822" y="977" style="font-size:11px;fill:#222">单位</text>
<text x="2212" y="977" style="font-size:11px;fill:#222">盈利</text>
</svg>
</body>
</html>
